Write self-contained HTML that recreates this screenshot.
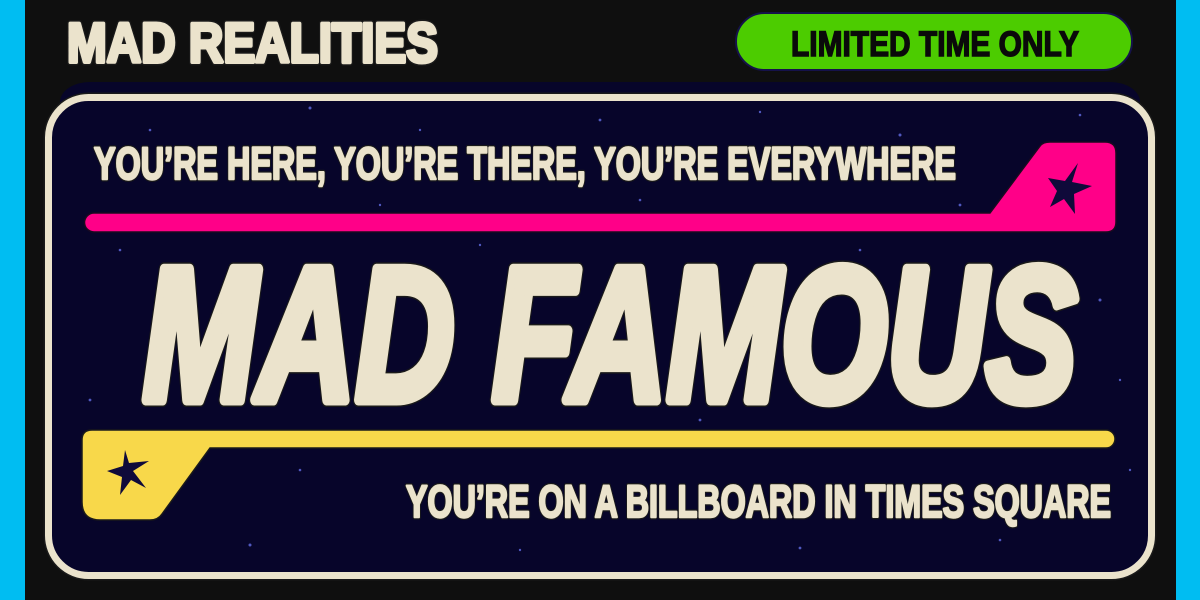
<!DOCTYPE html>
<html><head><meta charset="utf-8"><style>
html,body{margin:0;padding:0;width:1200px;height:600px;overflow:hidden;background:#0f0f0f}
svg{display:block}
</style></head><body>
<svg width="1200" height="600" viewBox="0 0 1200 600" xmlns="http://www.w3.org/2000/svg" font-family="Liberation Sans, sans-serif" font-weight="bold">
<rect width="1200" height="600" fill="#0f0f0f"/>
<rect x="0" y="0" width="25" height="600" fill="#00bdf2"/>
<rect x="1176" y="0" width="24" height="600" fill="#00bdf2"/>
<rect x="60" y="82" width="1080" height="40" rx="30" fill="#07052a"/>
<rect x="48.5" y="97.5" width="1103" height="478" rx="40" fill="#07052a" stroke="#1a1a1a" stroke-width="10"/>
<rect x="48.5" y="97.5" width="1103" height="478" rx="40" fill="#07052a" stroke="#ebe3cc" stroke-width="7"/>
<g fill="#6f7cff" opacity="0.7">
<circle cx="310" cy="108" r="1.5"/><circle cx="420" cy="130" r="1.2"/><circle cx="600" cy="120" r="1.4"/><circle cx="760" cy="112" r="1.2"/><circle cx="900" cy="135" r="1.5"/><circle cx="1080" cy="115" r="1.3"/>
<circle cx="120" cy="250" r="1.3"/><circle cx="230" cy="300" r="1.5"/><circle cx="480" cy="245" r="1.2"/><circle cx="700" cy="420" r="1.4"/><circle cx="860" cy="250" r="1.3"/><circle cx="1100" cy="300" r="1.5"/>
<circle cx="1120" cy="380" r="1.2"/><circle cx="90" cy="400" r="1.4"/><circle cx="300" cy="470" r="1.3"/><circle cx="250" cy="545" r="1.5"/><circle cx="520" cy="550" r="1.2"/><circle cx="800" cy="548" r="1.4"/><circle cx="1000" cy="540" r="1.3"/><circle cx="1130" cy="470" r="1.2"/>
<circle cx="640" cy="200" r="1.3"/><circle cx="380" cy="205" r="1.2"/><circle cx="960" cy="205" r="1.4"/><circle cx="150" cy="130" r="1.3"/>
</g>
<path d="M94,213 H990 L1040,146 Q1043,142 1050,142 H1105 Q1116,142 1116,153 V222 Q1116,232 1106,232 H94 A9.5,9.5 0 0 1 94,213 Z" fill="#ff0088" stroke="#1a0a20" stroke-width="1.5"/>
<polygon points="1078,163 1072,182 1092,186 1074,194 1075,214 1064,199 1050,207 1057,191 1048,178 1065,181" fill="#0f0a3a"/>
<path d="M92,430 H1106 A9,9 0 0 1 1106,448 H210 L162,514 Q158,520 150,520 H100 Q82,520 82,502 V440 Q82,430 92,430 Z" fill="#f8d84a" stroke="#1a1a1a" stroke-width="1.5"/>
<polygon points="125,450 129,463 149,461 133,471 146,488 131,480 120,495 122,477 107,471 123,466" fill="#0f0a3a"/>
<g font-weight="bold">
<text x="67" y="62" font-size="56" textLength="371" lengthAdjust="spacingAndGlyphs" fill="#ebe3cc" stroke="#1a1a1a" stroke-width="7" stroke-linejoin="round">MAD REALITIES</text>
<text x="67" y="62" font-size="56" textLength="371" lengthAdjust="spacingAndGlyphs" fill="#ebe3cc" stroke="#ebe3cc" stroke-width="4" stroke-linejoin="round">MAD REALITIES</text>
<rect x="736" y="13" width="396" height="57" rx="28.5" fill="#4ccc00" stroke="#15124a" stroke-width="2"/>
<text x="791" y="56" font-size="35" textLength="288" lengthAdjust="spacingAndGlyphs" fill="#0a0a0a" stroke="#0a0a0a" stroke-width="1.5">LIMITED TIME ONLY</text>
<text x="94" y="179" font-size="45" textLength="862" lengthAdjust="spacingAndGlyphs" fill="#ebe3cc" stroke="#1a1a1a" stroke-width="5" stroke-linejoin="round">YOU’RE HERE, YOU’RE THERE, YOU’RE EVERYWHERE</text>
<text x="94" y="179" font-size="45" textLength="862" lengthAdjust="spacingAndGlyphs" fill="#ebe3cc" stroke="#ebe3cc" stroke-width="2.5" stroke-linejoin="round">YOU’RE HERE, YOU’RE THERE, YOU’RE EVERYWHERE</text>
<text x="143" y="400" font-size="190" textLength="934" lengthAdjust="spacingAndGlyphs" fill="#ebe3cc" stroke="#1a1a1a" stroke-width="14" stroke-linejoin="round" font-style="italic">MAD FAMOUS</text>
<text x="143" y="400" font-size="190" textLength="934" lengthAdjust="spacingAndGlyphs" fill="#ebe3cc" stroke="#ebe3cc" stroke-width="11" stroke-linejoin="round" font-style="italic">MAD FAMOUS</text>
<text x="406" y="517" font-size="45" textLength="705" lengthAdjust="spacingAndGlyphs" fill="#ebe3cc" stroke="#1a1a1a" stroke-width="5" stroke-linejoin="round">YOU’RE ON A BILLBOARD IN TIMES SQUARE</text>
<text x="406" y="517" font-size="45" textLength="705" lengthAdjust="spacingAndGlyphs" fill="#ebe3cc" stroke="#ebe3cc" stroke-width="2.5" stroke-linejoin="round">YOU’RE ON A BILLBOARD IN TIMES SQUARE</text>
</g>
</svg>
</body></html>
